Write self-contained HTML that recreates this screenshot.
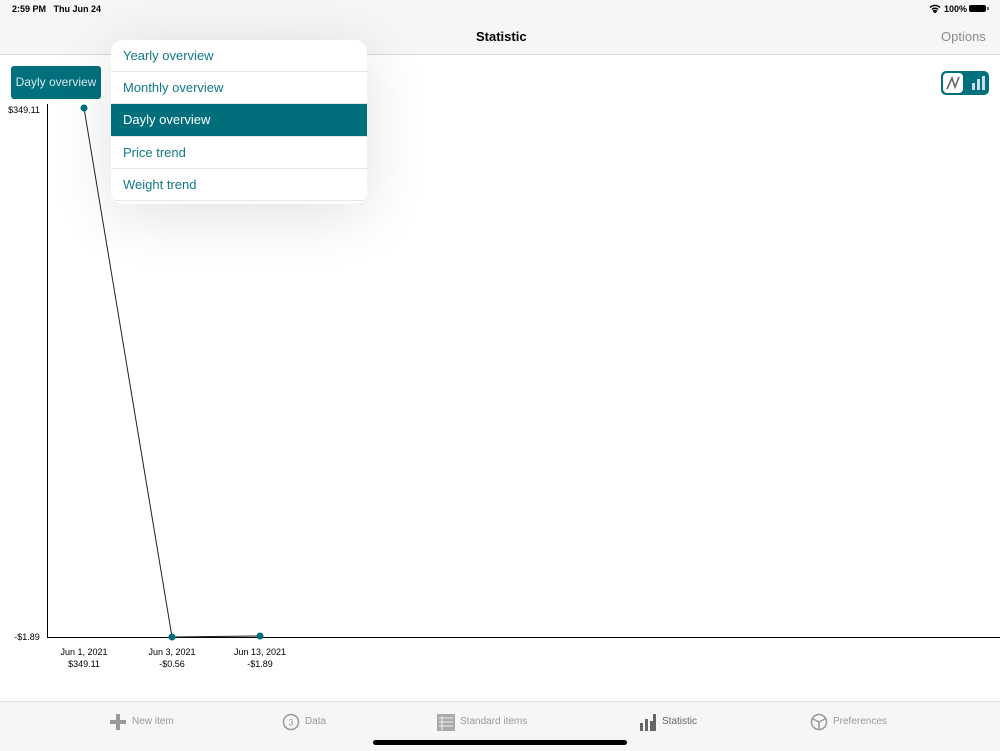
<!DOCTYPE html>
<html><head><style>
body{margin:0;width:1000px;height:750px;position:relative;overflow:hidden;background:#fff;font-family:"Liberation Sans",sans-serif}
.hdr{position:absolute;left:0;top:0;width:1000px;height:54px;background:#f6f6f6;border-bottom:1px solid #d8d8d8}
.t{position:absolute;white-space:nowrap}
.pop{position:absolute;left:111px;top:40px;width:256px;height:164px;background:#fff;border-radius:12px;overflow:hidden;box-shadow:0 10px 60px rgba(0,0,0,0.12)}
.pop div{height:31px;line-height:31px;padding-left:12px;color:#117a84;font-size:13px;border-bottom:1px solid #e6e6e6}
.pop .sel{background:#006f7b;color:#fff;height:32px;line-height:32px}
.tab{position:absolute;top:701px;left:0;width:1000px;height:49px;background:#f6f6f6;border-top:1px solid #e0e0e0}
.tab span{position:absolute;top:14px;font-size:10px;color:#999}
</style></head><body>
<div class="hdr"></div>
<div class="t" style="left:12px;top:4px;font-size:9px;font-weight:bold">2:59 PM&nbsp;&nbsp; Thu Jun 24</div>
<div class="t" style="left:944px;top:4px;font-size:9px;font-weight:bold">100%</div>
<svg class="t" style="left:929px;top:4px" width="12" height="9"><path d="M1 3.5A7 7 0 0 1 11 3.5M3 5.5A4 4 0 0 1 9 5.5M6 8.5l1.5-1.5a2 2 0 0 0-3 0z" stroke="#000" stroke-width="1.4" fill="none"/></svg>
<div class="t" style="left:969px;top:5px;width:17px;height:7px;background:#000;border-radius:2px"></div>
<div class="t" style="left:987px;top:7px;width:2px;height:3px;background:#666"></div>
<div class="t" style="left:476px;top:29px;font-size:13px;font-weight:bold">Statistic</div>
<div class="t" style="left:941px;top:29px;font-size:13px;color:#8a8a8a">Options</div>
<div class="t" style="left:11px;top:66px;width:90px;height:33px;background:#00707c;border-radius:3px;color:#d9ecee;font-size:12px;line-height:33px;text-align:center">Dayly overview</div>
<div class="t" style="left:941px;top:71px;width:48px;height:24px;background:#00707c;border-radius:5px"></div>
<div class="t" style="left:943px;top:73px;width:20px;height:20px;background:#fff;border-radius:4px"></div>
<svg class="t" style="left:943px;top:73px" width="46" height="20"><path d="M4 16L9 5L12 14L16 4" stroke="#666" stroke-width="1.6" fill="none"/><rect x="29" y="10" width="3" height="7" fill="#cde"/><rect x="34" y="6" width="3" height="11" fill="#cde"/><rect x="39" y="3" width="3" height="14" fill="#cde"/></svg>
<svg class="t" style="left:0;top:0" width="1000" height="700">
<line x1="47.5" y1="104" x2="47.5" y2="637" stroke="#000"/>
<line x1="47" y1="637.5" x2="1000" y2="637.5" stroke="#000"/>
<polyline points="84,108 172,637 260,636" stroke="#222" fill="none"/>
<circle cx="84" cy="108" r="3.5" fill="#006f7b"/><circle cx="172" cy="637" r="3.5" fill="#006f7b"/><circle cx="260" cy="636" r="3.5" fill="#006f7b"/>
<g font-size="9" font-family="Liberation Sans" text-anchor="middle">
<text x="24" y="113">$349.11</text><text x="27" y="640">-$1.89</text>
<text x="84" y="655">Jun 1, 2021</text><text x="84" y="667">$349.11</text>
<text x="172" y="655">Jun 3, 2021</text><text x="172" y="667">-$0.56</text>
<text x="260" y="655">Jun 13, 2021</text><text x="260" y="667">-$1.89</text></g>
</svg>
<div class="pop"><div>Yearly overview</div><div>Monthly overview</div><div class="sel">Dayly overview</div><div>Price trend</div><div>Weight trend</div></div>
<div class="tab">
<svg class="t" style="left:109px;top:11px" width="18" height="18"><path d="M9 1V17M1 9H17" stroke="#999" stroke-width="4"/></svg><span style="left:132px">New item</span>
<svg class="t" style="left:282px;top:11px" width="18" height="18"><circle cx="9" cy="9" r="7.5" stroke="#999" stroke-width="1.5" fill="none"/><text x="9" y="12.5" font-size="9" text-anchor="middle" fill="#999" font-family="Liberation Sans">3</text></svg><span style="left:305px">Data</span>
<svg class="t" style="left:437px;top:10px" width="18" height="20"><rect x="0" y="2" width="18" height="17" fill="#aaa"/><path d="M2 6H16M2 10H16M2 14H16M5 4V18" stroke="#eee"/></svg><span style="left:460px">Standard items</span>
<svg class="t" style="left:639px;top:10px" width="18" height="20"><path d="M1 19V11H4V19M6 19V7H9V19M11 19V9H14V19M14 19V2H17V19" fill="#666"/></svg><span style="left:662px;color:#666">Statistic</span>
<svg class="t" style="left:810px;top:11px" width="18" height="18"><circle cx="9" cy="9" r="7.5" stroke="#999" stroke-width="1.5" fill="none"/><path d="M9 9L3 6M9 9L15 6M9 9V16" stroke="#999" stroke-width="1.5"/></svg><span style="left:833px">Preferences</span>
<div class="t" style="left:373px;top:38px;width:254px;height:5px;background:#000;border-radius:3px"></div>
</div>
</body></html>
